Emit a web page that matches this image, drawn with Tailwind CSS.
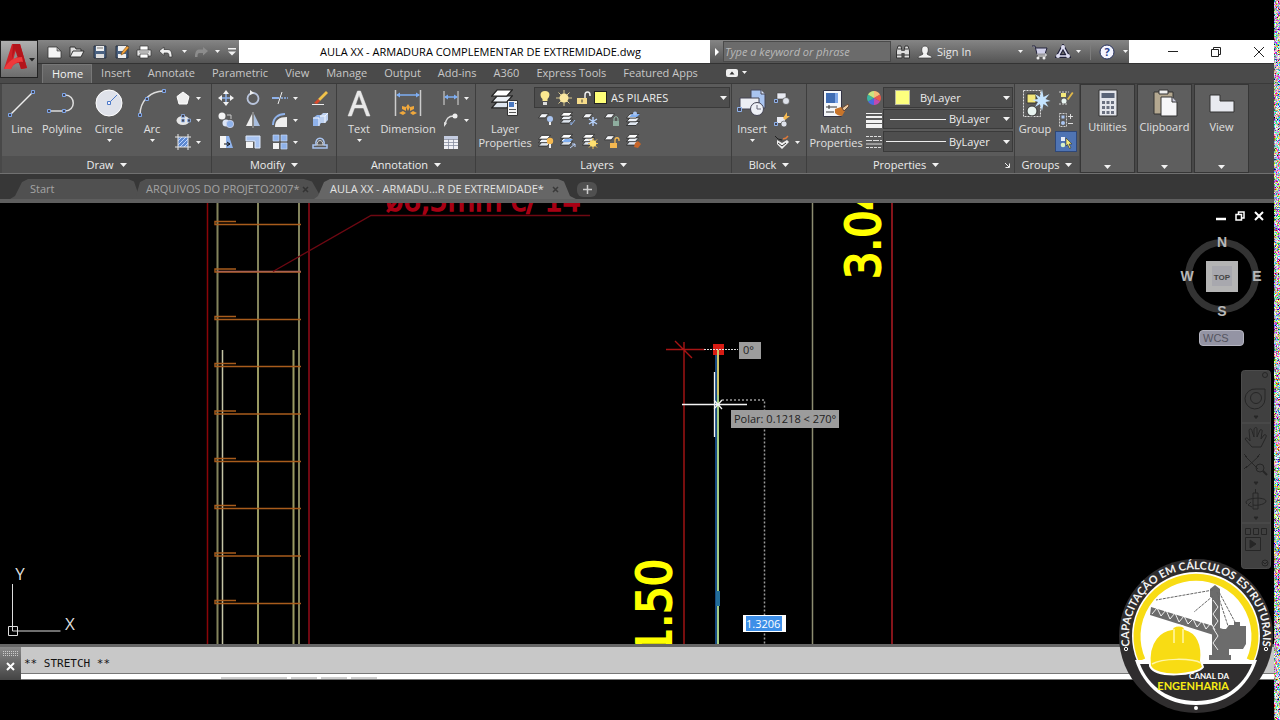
<!DOCTYPE html>
<html lang="pt-BR">
<head>
  <meta charset="UTF-8" />
  <meta name="viewport" content="width=device-width, initial-scale=1.0" />
  <title>AULA XX - ARMADURA COMPLEMENTAR DE EXTREMIDADE.dwg</title>
  <script src="https://cdn.jsdelivr.net/npm/@tailwindcss/browser@4"></script>
</head>
<body class="bg-black flex min-h-screen overflow-hidden font-['Open_Sans',sans-serif] text-[11px] leading-[14px] text-[#e0e0e0]">

  <!-- shared icon shapes -->
  <svg class="hidden">
    <symbol id="caret" viewBox="0 0 7 4"><path d="M0 0h7L3.500 4z" fill="#f2f2f2"/></symbol>
    <symbol id="sheets" viewBox="0 0 14 13">
      <path d="M4 8.500h9.500l-3.500 4H.5z" fill="#dfe6ef" stroke="#222" stroke-width=".8"/>
      <path d="M4 4.800h9.500l-3.500 4H.5z" fill="#eef2f7" stroke="#222" stroke-width=".8"/>
      <path d="M4 1h9.500L10 5H.5z" fill="#fff" stroke="#222" stroke-width=".8"/>
    </symbol>
    <symbol id="sheet" viewBox="0 0 12 6"><path d="M4 .5h7.500L8 5H.5z" fill="#f4f6fa" stroke="#222" stroke-width=".8"/></symbol>
  </svg>

  <div class="flex-1 min-w-0 flex flex-col pt-10 pb-10">

    <header class="flex bg-[#4a4a4a]">
      <button aria-label="Application menu" class="w-[38px] h-[38px] shrink-0 border border-[#222] bg-gradient-to-b from-[#b0b0b0] to-[#6c6c6c] flex items-center">
        <svg class="w-9 h-9" viewBox="0 0 36 36">
          <path d="M3 28 11 3h8l7 24-6 1-2-6c-3 0-6 1-8 6z" fill="#d02128"/>
          <path d="M12 3h7l7 24-6 1-6-20-3 10z" fill="#b3141b"/>
          <path d="M3 28c4-8 10-12 18-12l1 5c-6-1-10 2-12 7z" fill="#ee3a3c"/>
          <path d="m14.500 10 2 6-4 2z" fill="#8d8d8d"/>
          <path d="M28 17h6l-3 3.500z" fill="#222"/>
        </svg>
      </button>

      <div class="flex-1 min-w-0">
        <!-- title bar -->
        <div class="h-[23px] flex items-stretch bg-gradient-to-b from-[#858585] to-[#545454]">
          <div class="w-[201px] shrink-0 flex items-center pl-[6px]">
            <button aria-label="New" class="w-[22px] flex justify-center"><svg class="w-4 h-4" viewBox="0 0 16 16"><path d="M1 3h9l4 4v7H1z" fill="#f4f4f4" stroke="#333" stroke-width=".8"/><path d="M10 3v4h4z" fill="#aaa" stroke="#333" stroke-width=".6"/></svg></button>
            <button aria-label="Open" class="w-[23px] flex justify-center"><svg class="w-4 h-4" viewBox="0 0 16 16"><path d="M1 13V3h5l1 2h5v3" fill="#ddd" stroke="#333"/><path d="m1 13 3-6h11l-3 6z" fill="#eee" stroke="#333"/></svg></button>
            <button aria-label="Save" class="w-[23px] flex justify-center"><svg class="w-4 h-4" viewBox="0 0 16 16"><path d="M2 2h12v12H2z" fill="#4a6282" stroke="#2a3340"/><path d="M4 2h8v5H4z" fill="#eee"/><path d="M4 10h8v4H4z" fill="#ddd"/><path d="M5 4h6" stroke="#777"/></svg></button>
            <button aria-label="Save as" class="w-[23px] flex justify-center"><svg class="w-4 h-4" viewBox="0 0 16 16"><path d="M2 2h12v12H2z" fill="#4a6282" stroke="#2a3340"/><path d="M4 2h8v5H4zM4 10h8v4H4z" fill="#eee"/><path d="m7 11 1-3 5-6 2 1.500-5 6z" fill="#f2a33c" stroke="#7a4a10" stroke-width=".6"/></svg></button>
            <button aria-label="Plot" class="w-[22px] flex justify-center"><svg class="w-4 h-4" viewBox="0 0 16 16"><path d="M4 2h8v5H4z" fill="#fff" stroke="#333" stroke-width=".7"/><path d="M1 6h14v6H1z" fill="#e6e6e6" stroke="#333" stroke-width=".7"/><path d="M4 10h8v4H4z" fill="#fff" stroke="#333" stroke-width=".7"/><path d="M3 8h10" stroke="#888"/></svg></button>
            <button aria-label="Undo" class="w-[22px] flex justify-center"><svg class="w-4 h-4" viewBox="0 0 16 16"><path d="m1 7 5-4v2.500h4c4 0 4 6 4 7.500h-3c0-2 0-4-2-4H6v2.500z" fill="#eee" stroke="#333" stroke-width=".7"/></svg></button>
            <button aria-label="Undo list" class="w-[15px] flex justify-center"><svg class="w-[5px] h-[3px]"><use href="#caret"/></svg></button>
            <button aria-label="Redo" class="w-[18px] flex justify-center"><svg class="w-4 h-4" viewBox="0 0 16 16"><path d="m15 7-5-4v2.500H6c-4 0-4 6-4 7.500h2.500c0-2 0-4 2-4H10v2.500z" fill="#8c8c8c"/></svg></button>
            <button aria-label="Redo list" class="w-4 flex justify-center"><svg class="w-[5px] h-[3px]"><use href="#caret"/></svg></button>
            <button aria-label="Customize" class="w-[14px] flex justify-center"><svg class="w-2 h-2" viewBox="0 0 8 8"><path d="M0 0h8v1.500H0zM0 3.500h8l-4 4z" fill="#f2f2f2"/></svg></button>
          </div>
          <h1 class="flex-1 min-w-0 bg-white text-black text-[11px] flex items-center justify-center pl-3 whitespace-nowrap">AULA XX - ARMADURA COMPLEMENTAR DE EXTREMIDADE.dwg</h1>
          <button aria-label="Toggle search" class="w-[13px] shrink-0 flex items-center justify-center"><svg class="w-1 h-2" viewBox="0 0 4 8"><path d="m0 0 4 4-4 4z" fill="#fff"/></svg></button>
          <input type="text" aria-label="Search" placeholder="Type a keyword or phrase" class="w-[168px] shrink-0 my-px px-px border border-[#4a4a4a] bg-[#6b6b6b] text-[11px] italic placeholder:text-[#b9b9b9]">
          <div class="w-[238px] shrink-0 flex items-center">
            <button aria-label="Find" class="w-6 flex justify-center"><svg class="w-4 h-4" viewBox="0 0 16 16"><path d="M1.500 14V7l1.500-5h3l1 5v7zM9 14V7l1-5h3l1.500 5v7z" fill="#ddd" stroke="#333"/><path d="M6 7h4v2H6z" fill="#ddd"/><path d="M3 5h3M10 5h3M2 11h5M9 11h5" stroke="#333"/></svg></button>
            <button class="flex items-center gap-1 w-[81px] pl-[2px] text-[#e8e8e8]"><svg class="w-4 h-4" viewBox="0 0 16 16"><path d="M1 14c0-3 4-2.500 5-4-2-3-2-8 2-8s4 5 2 8c1 1.500 5 1 5 4z" fill="#f2f2f2" stroke="#333" stroke-width=".7"/></svg>Sign In</button>
            <button aria-label="Account menu" class="w-12 flex justify-center"><svg class="w-[5px] h-[3px]"><use href="#caret"/></svg></button>
            <button aria-label="App store" class="-ml-4 w-6 flex justify-center"><svg class="w-4 h-4" viewBox="0 0 16 16"><path d="M0 2h3l2 8h8l2-6H4" fill="#cfcfe8" stroke="#22223a" stroke-width="1"/><path d="M5 10h9v2H6" stroke="#eee" fill="none"/><circle cx="6" cy="14" r="1.500" fill="#eee"/><circle cx="12" cy="14" r="1.500" fill="#eee"/></svg></button>
            <button aria-label="Connect" class="w-[22px] flex justify-center"><svg class="w-4 h-4" viewBox="0 0 16 16"><path d="M8 3 3 12h10z" fill="none" stroke="#22223a" stroke-width="4"/><path d="M8 3 3 12h10z" fill="none" stroke="#dcdcf0" stroke-width="1.600"/><circle cx="8" cy="3" r="2" fill="#dcdcf0"/><circle cx="3" cy="12" r="2" fill="#dcdcf0"/><circle cx="13" cy="12" r="2" fill="#dcdcf0"/></svg></button>
            <button aria-label="Connect menu" class="w-2 flex justify-center"><svg class="w-[5px] h-[3px]"><use href="#caret"/></svg></button>
            <span class="ml-2 w-px h-4 bg-[#7c7c7c]"></span>
            <button aria-label="Help" class="w-8 flex justify-center"><svg class="w-4 h-4" viewBox="0 0 16 16"><circle cx="8" cy="8" r="7" fill="#f4f4ff" stroke="#26305c"/><text x="8" y="12" text-anchor="middle" font-size="11" font-weight="700" fill="#26408c">?</text></svg></button>
            <button aria-label="Help menu" class="w-[5px]"><svg class="w-[5px] h-[3px]"><use href="#caret"/></svg></button>
          </div>
          <div class="w-[145px] shrink-0 bg-white text-[#222] flex items-center pl-[23px]">
            <button aria-label="Minimize" class="w-[42px] flex justify-center"><svg class="w-3 h-3" viewBox="0 0 12 12"><path d="M1 5.500h10" stroke="#222"/></svg></button>
            <button aria-label="Restore" class="w-[43px] flex justify-center"><svg class="w-3 h-3" viewBox="0 0 12 12"><path d="M1.500 3.500h7v7h-7zM3.500 3V1.500h7v7H9" stroke="#222" fill="none"/></svg></button>
            <button aria-label="Close" class="flex-1 flex justify-center pl-[6px]"><svg class="w-3 h-3" viewBox="0 0 12 12"><path d="m1 1 10 10M11 1 1 11" stroke="#222"/></svg></button>
          </div>
        </div>

        <!-- ribbon tabs -->
        <nav class="h-5 flex items-stretch pl-1 pb-[2px] border-t border-[#333] text-[#c8c8c8] whitespace-nowrap">
          <a href="#" class="-mb-[2px] pl-[9px] pr-2 pt-[2px] bg-gradient-to-b from-[#6a6a6a] to-[#5c5c5c] border border-b-0 border-[#777] text-[#f4f4f4] flex items-start leading-[13px]">Home</a>
          <a href="#" class="pl-[9px] pr-2 flex items-center">Insert</a>
          <a href="#" class="pl-[9px] pr-2 flex items-center">Annotate</a>
          <a href="#" class="pl-[9px] pr-2 flex items-center">Parametric</a>
          <a href="#" class="pl-[9px] pr-2 flex items-center">View</a>
          <a href="#" class="pl-[9px] pr-2 flex items-center">Manage</a>
          <a href="#" class="pl-[9px] pr-2 flex items-center">Output</a>
          <a href="#" class="pl-[9px] pr-2 flex items-center">Add-ins</a>
          <a href="#" class="pl-[9px] pr-2 flex items-center">A360</a>
          <a href="#" class="pl-[9px] pr-2 flex items-center">Express Tools</a>
          <a href="#" class="pl-[9px] pr-2 flex items-center">Featured Apps</a>
          <button aria-label="Minimize ribbon" class="ml-5 flex items-center gap-1"><svg class="w-3 h-2" viewBox="0 0 12 8"><rect width="12" height="8" rx="2" fill="#eee"/><path d="M3.500 5.500h5L6 2.500z" fill="#333"/></svg><svg class="w-[5px] h-[3px]"><use href="#caret"/></svg></button>
        </nav>
      </div>
    </header>

    <!-- ribbon panels -->
    <section class="h-[91px] shrink-0 flex bg-[#484848] border-t border-b border-t-[#3a3a3a] border-b-[#707070] pl-[2px]">

      <div class="w-[210px] shrink-0 flex flex-col border-r border-[#3e3e3e] bg-[#5b5b5b]">
        <div class="flex-1 flex pt-[3px] items-start">
          <button class="w-10 flex flex-col items-center gap-[3px]">
            <svg class="w-8 h-8" viewBox="0 0 32 32"><path d="M4 28 27 5" stroke="#eee" stroke-width="1.500"/><path d="M2.500 26.500h3v3h-3zM25.500 3.500h3v3h-3z" fill="#445" stroke="#7ea6e8"/></svg>
            Line
          </button>
          <button class="w-10 flex flex-col items-center gap-[3px]">
            <svg class="w-8 h-8" viewBox="0 0 32 32"><path d="M4 24h15c11 0 11-16 0-16" stroke="#ddd" stroke-width="1.500" fill="none"/><path d="M1.500 22.500h3v3h-3zM16.500 22.500h3v3h-3zM16.500 6.500h3v3h-3z" fill="#445" stroke="#7ea6e8"/></svg>
            Polyline
          </button>
          <button class="w-[54px] flex flex-col items-center gap-[3px]">
            <svg class="w-8 h-8" viewBox="0 0 32 32"><circle cx="16" cy="16" r="13" fill="#dfe2ea" stroke="#fff"/><path d="m16 16 8-8" stroke="#4d7bc9"/><path d="M14.500 14.500h3v3h-3z" fill="#eef" stroke="#4d7bc9"/></svg>
            Circle
            <svg class="w-[5px] h-[3px]"><use href="#caret"/></svg>
          </button>
          <button class="w-8 flex flex-col items-center gap-[3px]">
            <svg class="w-8 h-8" viewBox="0 0 32 32"><path d="M4 28C4 14 14 4 28 4" stroke="#ddd" stroke-width="1.500" fill="none"/><path d="M2.500 26.500h3v3h-3zM9.500 10.500h3v3h-3zM26.500 2.500h3v3h-3z" fill="#445" stroke="#7ea6e8"/></svg>
            Arc
            <svg class="w-[5px] h-[3px]"><use href="#caret"/></svg>
          </button>
          <div class="pl-[7px]">
            <button aria-label="Polygon" class="h-[22px] flex items-center gap-[5px]"><svg class="w-4 h-4" viewBox="0 0 16 16"><path d="m8 2 6 4.500L12 14H4L2 6.500z" fill="#eee" stroke="#fff"/></svg><svg class="w-[5px] h-[3px]"><use href="#caret"/></svg></button>
            <button aria-label="Ellipse" class="h-[22px] flex items-center gap-[5px]"><svg class="w-4 h-4" viewBox="0 0 16 16"><ellipse cx="8" cy="8.500" rx="6.500" ry="4.500" fill="#e6e6e6"/><path d="M6.500 7h3v3h-3zM12.500 7h3v3h-3zM6.500 2.500h3v3h-3z" fill="#445" stroke="#8fb2ea" stroke-width=".8"/></svg><svg class="w-[5px] h-[3px]"><use href="#caret"/></svg></button>
            <button aria-label="Hatch" class="h-[22px] flex items-center gap-[5px]"><svg class="w-4 h-4" viewBox="0 0 16 16"><path d="M3 3h10v10H3z" fill="#5c88d0"/><path d="m3 7 4-4M3 11l8-8M5 13l8-8M9 13l4-4" stroke="#bcd4ff"/><path d="M3 0v16M13 0v16M0 3h16M0 13h16" stroke="#e8e8e8"/></svg><svg class="w-[5px] h-[3px]"><use href="#caret"/></svg></button>
          </div>
        </div>
        <button class="h-[17px] flex items-center justify-center gap-[6px] bg-[#505050] text-[#ececec]">Draw <svg class="w-[7px] h-1"><use href="#caret"/></svg></button>
      </div>

      <div class="w-[125px] shrink-0 flex flex-col border-r border-[#3e3e3e] bg-[#5b5b5b]">
        <div class="flex-1 grid grid-cols-[28px_26px_38px_32px] auto-rows-[22px] pt-[3px] justify-items-center items-center">
          <button aria-label="Move"><svg class="w-4 h-4" viewBox="0 0 16 16"><path d="m8 0 3 4H5zM8 16l3-4H5zM0 8l4-3v6zM16 8l-4-3v6z" fill="#f2f2f2"/><path d="M8 4v8M4 8h8" stroke="#8fb2ea" stroke-width="1.500"/></svg></button>
          <button aria-label="Rotate"><svg class="w-4 h-4" viewBox="0 0 16 16"><circle cx="8" cy="8.500" r="5.500" fill="none" stroke="#b8c4dc" stroke-width="1.800"/><path d="M5 0v5l4-2z" fill="#eee"/></svg></button>
          <button aria-label="Trim" class="flex items-center gap-[5px]"><svg class="w-4 h-4" viewBox="0 0 16 16"><path d="M0 8h7" stroke="#8fb2ea" stroke-width="2"/><path d="M9 8h7" stroke="#8fb2ea" stroke-width="1.500" stroke-dasharray="2 1"/><path d="M10 2 6 14" stroke="#eee"/></svg><svg class="w-[5px] h-[3px]"><use href="#caret"/></svg></button>
          <button aria-label="Erase"><svg class="w-4 h-4" viewBox="0 0 16 16"><path d="m6 9 8-8 2 2-8 8z" fill="#f0c24a"/><path d="m2 13 4-4 2 2-3 3z" fill="#d9482a"/><path d="M0 14.500h12" stroke="#eee"/></svg></button>
          <button aria-label="Copy"><svg class="w-4 h-4" viewBox="0 0 16 16"><circle cx="4" cy="4" r="3.500" fill="#f4f4f4"/><circle cx="8" cy="11" r="3.500" fill="#dde6f6"/><circle cx="12" cy="12" r="3.700" fill="#8fb2ea" stroke="#dde" stroke-width=".7"/><path d="M9 3h4v4" fill="none" stroke="#ccc"/></svg></button>
          <button aria-label="Mirror"><svg class="w-4 h-4" viewBox="0 0 16 16"><path d="M7 2v12H1z" fill="#eee"/><path d="M9 2v12h6z" fill="#a9bede"/><path d="M8 0v16" stroke="#ddd" stroke-width=".7"/></svg></button>
          <button aria-label="Fillet" class="flex items-center gap-[5px]"><svg class="w-4 h-4" viewBox="0 0 16 16"><path d="M3 15c0-7 4-10 12-10v10z" fill="#eee"/><path d="M1 13C1 6 6 2 13 2" fill="none" stroke="#8fb2ea" stroke-width="2"/></svg><svg class="w-[5px] h-[3px]"><use href="#caret"/></svg></button>
          <button aria-label="Explode"><svg class="w-4 h-4" viewBox="0 0 16 16"><path d="m1 6 4-3h4v8l-2 3H1z" fill="#8fb2ea"/><path d="m8 4 3-3h5v7l-3 3H8z" fill="#bcd0f0"/><path d="M8 4h5v7M13 4l3-3M1 6h6v8" fill="none" stroke="#f4f8ff"/></svg></button>
          <button aria-label="Stretch"><svg class="w-4 h-4" viewBox="0 0 16 16"><path d="M2 2h6v12H2z" fill="#f4f4f4"/><path d="m8 2 3 0 4 12H8z" fill="#8fb2ea"/><path d="M6 10h5M9 8l3 2-3 2" fill="none" stroke="#111"/></svg></button>
          <button aria-label="Scale"><svg class="w-4 h-4" viewBox="0 0 16 16"><path d="M1 2h14v12h-5V7H1z" fill="#a9c4f0" stroke="#dde8fa"/><path d="M1 8h7v6H1z" fill="#f4f4f4"/></svg></button>
          <button aria-label="Array" class="flex items-center gap-[5px]"><svg class="w-4 h-4" viewBox="0 0 16 16"><path d="M1 9h6v6H1z" fill="#f4f4f4"/><path d="M1 1h6v6H1zM9 1h6v6H9zM9 9h6v6H9z" fill="#8fb2ea" stroke="#c6d8f6" stroke-width=".7"/></svg><svg class="w-[5px] h-[3px]"><use href="#caret"/></svg></button>
          <button aria-label="Offset"><svg class="w-4 h-4" viewBox="0 0 16 16"><path d="M1 14h14v-3h-3c2-9-10-9-8 0H1z" fill="none" stroke="#a9c4f0" stroke-width="1.500"/><path d="M5 11h6c0-6-6-6-6 0" fill="none" stroke="#eee" stroke-width=".8"/></svg></button>
        </div>
        <button class="h-[17px] flex items-center justify-center gap-[6px] bg-[#505050] text-[#ececec]">Modify <svg class="w-[7px] h-1"><use href="#caret"/></svg></button>
      </div>

      <div class="w-[139px] shrink-0 flex flex-col border-r border-[#3e3e3e] bg-[#5b5b5b]">
        <div class="flex-1 flex pt-[3px] items-start">
          <button class="w-11 flex flex-col items-center gap-[3px]">
            <svg class="w-8 h-8" viewBox="0 0 32 32"><path d="M5 29 14.500 4h3L27 29h-3.500l-3-8h-9l-3 8zM12.500 18h7L16 8z" fill="#e8e8e8" stroke="#e8e8e8" stroke-width=".5" fill-rule="evenodd"/></svg>
            Text
            <svg class="w-[5px] h-[3px]"><use href="#caret"/></svg>
          </button>
          <button class="w-[54px] flex flex-col items-center gap-[3px]">
            <svg class="w-8 h-8" viewBox="0 0 32 32"><path d="M3.500 3v26M28.500 3v26" stroke="#ccc" stroke-width="1.500"/><path d="M5 8h22" stroke="#7eaef2" stroke-width="1.500"/><path d="m4 8 4-2.500v5zM28 8l-4-2.500v5z" fill="#7eaef2"/><g fill="#f0a83c"><path d="m16 17 2 3-2 4-2-4zM10 19l4 1 0 4-4-2zM22 19l-4 1 0 4 4-2zM7 26l4-2 3 2-3 2zM25 26l-4-2-3 2 3 2z"/></g></svg>
            Dimension
          </button>
          <div class="pl-2">
            <button aria-label="Linear" class="h-[22px] flex items-center gap-[5px]"><svg class="w-4 h-4" viewBox="0 0 16 16"><path d="M1 1v14M15 1v14" stroke="#ddd"/><path d="M2 7h12" stroke="#7eaef2" stroke-width="1.500"/><path d="m1 7 4-2.500v5zM15 7l-4-2.500v5z" fill="#7eaef2"/></svg><svg class="w-[5px] h-[3px]"><use href="#caret"/></svg></button>
            <button aria-label="Leader" class="h-[22px] flex items-center gap-[5px]"><svg class="w-4 h-4" viewBox="0 0 16 16"><path d="M2 13C3 7 5 4 11 4" fill="none" stroke="#ddd" stroke-width="1.300"/><circle cx="12" cy="4" r="2.500" fill="#eee"/><path d="m1 15 0-5 3 1z" fill="#ddd"/></svg><svg class="w-[5px] h-[3px]"><use href="#caret"/></svg></button>
            <button aria-label="Table" class="h-[22px] flex items-center"><svg class="w-4 h-4" viewBox="0 0 16 16"><path d="M1 2h14v13H1z" fill="#f0f0f4"/><path d="M1 2h14v3H1z" fill="#c4cce0"/><path d="M1 5.500h14M1 8.500h14M1 11.500h14M5.500 5v10M10.500 5v10" stroke="#888ea0" stroke-width=".8"/></svg></button>
          </div>
        </div>
        <button class="h-[17px] flex items-center justify-center gap-[6px] bg-[#505050] text-[#ececec]">Annotation <svg class="w-[7px] h-1"><use href="#caret"/></svg></button>
      </div>

      <div class="w-64 shrink-0 flex flex-col border-r border-[#3e3e3e] bg-[#5b5b5b]">
        <div class="flex-1 flex pt-[3px] items-start">
          <button class="w-[58px] flex flex-col items-center gap-[3px]">
            <svg class="w-8 h-8" viewBox="0 0 32 32"><use href="#sheets" x="2" y="1" width="22" height="21"/><path d="M18.500 13.500h10v15h-10z" fill="#f4f4f4" stroke="#333"/><path d="M20 15h5v5h-5z" fill="#4a78c0"/><path d="M20 22.500h7M20 25.500h7M26 16.500h1.500" stroke="#555"/></svg>
            Layer Properties
          </button>
          <div class="flex-1 pr-px">
            <div class="relative h-[21px]">
              <select aria-label="Layer" class="appearance-none w-full h-[21px] pl-[76px] border border-[#3a3a3a] bg-[#4e4e4e] text-[11px] text-[#ececec]">
                <option>AS PILARES</option>
              </select>
              <span class="absolute inset-y-0 left-[3px] right-[3px] flex items-center gap-[3px] pointer-events-none">
                <svg class="w-4 h-4" viewBox="0 0 16 16"><path d="M8 1c6 0 5 6 2.500 8v2h-5V9C3 7 2 1 8 1" fill="#fbe890"/><path d="M6 12h4v3H6z" fill="#ddd"/></svg>
                <svg class="w-4 h-4" viewBox="0 0 16 16"><path d="M8 0v16M0 8h16M2.500 2.500l11 11M13.500 2.500l-11 11" stroke="#d8c890"/><circle cx="8" cy="8" r="4.500" fill="#fbe8a0"/></svg>
                <svg class="w-4 h-4" viewBox="0 0 16 16"><path d="M10 8V5c0-4 5-4 5 0v1" fill="none" stroke="#eee" stroke-width="1.500"/><path d="M2 8h10v6H2z" fill="#f6dc8a"/><path d="M7 9.500v3" stroke="#333"/></svg>
                <i class="w-[13px] h-[13px] bg-[#ffff78] border border-[#222]"></i>
                <svg class="w-[7px] h-1 ml-auto"><use href="#caret"/></svg>
              </span>
            </div>
            <div class="grid grid-cols-[repeat(5,22px)] auto-rows-[22px] pl-px items-center justify-items-center">
              <button aria-label="Off"><svg class="w-4 h-4" viewBox="0 0 16 16"><use href="#sheet" x="0" y="2" width="11" height="6"/><circle cx="12" cy="8" r="3" fill="#a9c4f0"/><path d="M11 11h2v3h-2z" fill="#eee"/></svg></button>
              <button aria-label="Isolate"><svg class="w-4 h-4" viewBox="0 0 16 16"><use href="#sheets" x="0" y="0" width="13" height="13"/><path d="m15 9-4 5v-3" stroke="#8fb2ea" fill="none"/></svg></button>
              <button aria-label="Freeze"><svg class="w-4 h-4" viewBox="0 0 16 16"><use href="#sheet" x="0" y="2" width="11" height="6"/><path d="M11 6v9M7 8l8 5M15 8l-8 5" stroke="#b8d4ff" stroke-width="1.400"/></svg></button>
              <button aria-label="Lock"><svg class="w-4 h-4" viewBox="0 0 16 16"><use href="#sheet" x="0" y="2" width="11" height="6"/><path d="M10 10V8c0-3 4-3 4 0v2" fill="none" stroke="#9bc4b0"/><path d="M9 10h6v5H9z" fill="#8fae9f"/></svg></button>
              <button aria-label="Make current"><svg class="w-4 h-4" viewBox="0 0 16 16"><use href="#sheets" x="0" y="2" width="14" height="13"/><path d="m3 6 3-3h8l-3 3z" fill="#7eaef2"/><circle cx="9" cy="2.500" r="2" fill="#a9c4f0"/></svg></button>
              <button aria-label="Turn all on"><svg class="w-4 h-4" viewBox="0 0 16 16"><use href="#sheets" x="0" y="1" width="13" height="13"/><circle cx="12" cy="8" r="3.200" fill="#f4b850"/><path d="M11 11h2v4h-2z" fill="#eee"/></svg></button>
              <button aria-label="Unisolate"><svg class="w-4 h-4" viewBox="0 0 16 16"><use href="#sheets" x="0" y="0" width="13" height="13"/><path d="m2 9 3-3h8l-3 3z" fill="#7eaef2"/><path d="m10 15 5-4M12 11h3v3" stroke="#bcd4ff" fill="none"/></svg></button>
              <button aria-label="Thaw all"><svg class="w-4 h-4" viewBox="0 0 16 16"><use href="#sheets" x="0" y="0" width="13" height="13"/><path d="M11 5v11M6 10.500h10M7 6.500l8 8M15 6.500l-8 8" stroke="#f4c050"/><circle cx="11" cy="10.500" r="3.300" fill="#ffe070"/></svg></button>
              <button aria-label="Unlock"><svg class="w-4 h-4" viewBox="0 0 16 16"><use href="#sheet" x="0" y="2" width="11" height="6"/><path d="M11 10V7c0-3 4-3 4 0v1" fill="none" stroke="#f4b850" stroke-width="1.300"/><path d="M6 10h7v5H6z" fill="#f4b850"/></svg></button>
              <button aria-label="Match layer"><svg class="w-4 h-4" viewBox="0 0 16 16"><use href="#sheets" x="0" y="0" width="13" height="13"/><path d="m9 10 3-2 3 3-3 4-4-1z" fill="#c8662a"/></svg></button>
            </div>
          </div>
        </div>
        <button class="h-[17px] flex items-center justify-center gap-[6px] bg-[#505050] text-[#ececec]">Layers <svg class="w-[7px] h-1"><use href="#caret"/></svg></button>
      </div>

      <div class="w-[75px] shrink-0 flex flex-col border-r border-[#3e3e3e] bg-[#5b5b5b]">
        <div class="flex-1 flex pt-[3px] items-start">
          <button class="w-10 flex flex-col items-center gap-[3px]">
            <svg class="w-8 h-8" viewBox="0 0 32 32"><path d="M15 3h10l4 4v14H15z" fill="#a9c4f0" stroke="#445"/><path d="M25 3v4h4" fill="#dde8fa" stroke="#445"/><path d="M4 11h19v11H4z" fill="#eceef4" stroke="#445"/><circle cx="21" cy="22" r="6.500" fill="#eef0f6" stroke="#445"/><path d="M21 18v4h4" fill="none" stroke="#667"/><path d="M1.500 20.500h4v4h-4z" fill="#445" stroke="#8fb2ea"/></svg>
            Insert
            <svg class="w-[5px] h-[3px]"><use href="#caret"/></svg>
          </button>
          <div>
            <button aria-label="Create block" class="h-[22px] flex items-center pl-[2px]"><svg class="w-4 h-4" viewBox="0 0 16 16"><path d="M3 3h9v6H3z" fill="#e8eaf2" stroke="#444" stroke-width=".6"/><circle cx="12" cy="11" r="3.500" fill="#dfe3ec" stroke="#444" stroke-width=".6"/><path d="M.5 9.500h3v3h-3z" fill="#445" stroke="#8fb2ea"/></svg></button>
            <button aria-label="Edit block" class="h-[22px] flex items-center pl-[2px]"><svg class="w-4 h-4" viewBox="0 0 16 16"><path d="M3 5h8v6H3z" fill="#e8eaf2"/><circle cx="10" cy="12" r="3" fill="#dfe3ec" stroke="#444" stroke-width=".6"/><path d="m9 6 4-6v4h3l-5 4z" fill="#f4b850"/><path d="M.5 10.500h3v3h-3z" fill="#445" stroke="#8fb2ea"/></svg></button>
            <button aria-label="Edit attributes" class="h-[22px] flex items-center gap-[5px] pl-[2px]"><svg class="w-4 h-4" viewBox="0 0 16 16"><path d="m3 6 5 3 5-3 2 2-7 7-5-5z" fill="#f0f0f0"/><path d="m1 2 3 3 4 1" fill="none" stroke="#222"/><path d="m9 5 3-1 2-2" fill="none" stroke="#e07a3a" stroke-width="1.500"/><path d="m4 9 4 3 4-3" fill="none" stroke="#333"/></svg><svg class="w-[5px] h-[3px]"><use href="#caret"/></svg></button>
          </div>
        </div>
        <button class="h-[17px] flex items-center justify-center gap-[6px] bg-[#505050] text-[#ececec]">Block <svg class="w-[7px] h-1"><use href="#caret"/></svg></button>
      </div>

      <div class="w-[208px] shrink-0 flex flex-col border-r border-[#3e3e3e] bg-[#5b5b5b]">
        <div class="flex-1 flex pt-[3px] items-start">
          <button class="w-[58px] flex flex-col items-center gap-[3px]">
            <svg class="w-8 h-8" viewBox="0 0 32 32"><path d="M3.500 3.500h18v26h-18z" fill="#f4f6fa" stroke="#334"/><path d="M6 6h12v10H6z" fill="#3f6cb4"/><path d="M15 6h3v10h-3z" fill="#7ea6e8"/><path d="M6 20h11M6 25h8M9 18v4" stroke="#333"/><path d="m15 22 6-2 4 4-3 5c-3 0-5-1-7-3z" fill="#c8742a"/><path d="m22 21 6-4 1 2-5 5z" fill="#e8c8a0" stroke="#643"/></svg>
            Match Properties
          </button>
          <div class="w-[18px]">
            <div class="h-[22px] flex items-center pl-px"><svg class="w-4 h-4" viewBox="0 0 16 16"><path d="M8 8V1a7 7 0 0 1 6 3.500z" fill="#f4a03c"/><path d="m8 8 6-3.500a7 7 0 0 1 0 7z" fill="#e85a4a"/><path d="m8 8 6 3.500A7 7 0 0 1 8 15z" fill="#c04ab0"/><path d="M8 8v7a7 7 0 0 1-6-3.500z" fill="#4a6ae0"/><path d="m8 8-6 3.500a7 7 0 0 1 0-7z" fill="#3cb4a0"/><path d="M8 8 2 4.500A7 7 0 0 1 8 1z" fill="#b4d84a"/><path d="M8 8 2 4.500A7 7 0 0 1 14 4.500z" fill="#fff" opacity=".3"/></svg></div>
            <div class="h-[22px] flex items-center pl-px"><svg class="w-4 h-4" viewBox="0 0 16 16"><path d="M0 1h16v1H0zM0 4h16v2H0zM0 8h16v3H0zM0 12h16v4H0z" fill="#f2f2f2"/></svg></div>
            <div class="h-[22px] flex items-center pl-px"><svg class="w-4 h-4" viewBox="0 0 16 16"><path d="M0 2.500h16M0 13.500h16" stroke="#ddd" stroke-dasharray="3 1"/><path d="M0 6.500h16" stroke="#ddd" stroke-dasharray="6 1"/><path d="M0 10h16" stroke="#ddd"/></svg></div>
          </div>
          <div class="flex-1 pr-px">
            <div class="relative h-[22px]">
              <select aria-label="Object color" class="appearance-none w-full h-[21px] pl-9 border border-[#3a3a3a] bg-[#4e4e4e] text-[11px] text-[#ececec]"><option>ByLayer</option></select>
              <span class="absolute top-0 h-[21px] left-3 right-[3px] flex items-center pointer-events-none"><i class="w-[15px] h-[15px] bg-[#fdff7e] border border-[#b8b8a0]"></i><svg class="w-[7px] h-1 ml-auto"><use href="#caret"/></svg></span>
            </div>
            <div class="relative h-[22px]">
              <select aria-label="Lineweight" class="appearance-none w-full h-[20px] pl-[65px] border border-[#3a3a3a] bg-[#4e4e4e] text-[11px] text-[#ececec]"><option>ByLayer</option></select>
              <span class="absolute top-0 h-[20px] left-[7px] right-[3px] flex items-center pointer-events-none"><i class="w-[56px] h-px bg-[#eee]"></i><svg class="w-[7px] h-1 ml-auto"><use href="#caret"/></svg></span>
            </div>
            <div class="relative h-[22px]">
              <select aria-label="Linetype" class="appearance-none w-full h-[21px] pl-[65px] border border-[#3a3a3a] bg-[#4e4e4e] text-[11px] text-[#ececec]"><option>ByLayer</option></select>
              <span class="absolute top-0 h-[21px] left-[3px] right-[3px] flex items-center pointer-events-none"><i class="w-[60px] h-px bg-[#eee]"></i><svg class="w-[7px] h-1 ml-auto"><use href="#caret"/></svg></span>
            </div>
          </div>
        </div>
        <div class="h-[17px] flex items-center bg-[#505050] pl-[66px] pr-1">
          <button class="flex items-center gap-[6px] text-[#ececec]">Properties <svg class="w-[7px] h-1"><use href="#caret"/></svg></button>
          <button aria-label="Properties palette" class="ml-auto"><svg class="w-[6px] h-[6px]" viewBox="0 0 6 6"><path d="m1 1 4 4M5.500 1.500v4h-4" stroke="#eee" fill="none"/></svg></button>
        </div>
      </div>

      <div class="w-[64px] shrink-0 flex flex-col bg-[#5b5b5b]">
        <div class="flex-1 flex pt-[3px] items-start">
          <button class="w-10 flex flex-col items-center gap-[3px]">
            <svg class="w-8 h-8" viewBox="0 0 32 32"><path d="M4.500 3.500h17v26h-17z" fill="none" stroke="#ddd" stroke-dasharray="2 1"/><path d="M8 7h9v9H8z" fill="#f4e87a" stroke="#333"/><circle cx="13" cy="24" r="5" fill="#e8f4f0" stroke="#333"/><path d="m23 2 1.500 8 6-3-4 5 5 2-5 1 3 5-5-3-1.500 7-2-7-5 3 3-5-6-2 6-1-3-5 5 3z" fill="#c4e4ff"/></svg>
            Group
          </button>
          <div class="flex flex-col items-center">
            <button aria-label="Group edit" class="h-[22px] w-[22px] flex items-center justify-center"><svg class="w-4 h-4" viewBox="0 0 16 16"><path d="M1 2h10M1 14h8" stroke="#ccc" stroke-dasharray="2 1"/><path d="M3 3h5v4H3z" fill="#f4e87a"/><circle cx="6" cy="11" r="2.500" fill="#e8f4f0"/><path d="m9 9 5-7 1.500 1-5 7z" fill="#e0b84a"/></svg></button>
            <button aria-label="Ungroup" class="h-[22px] w-[22px] flex items-center justify-center"><svg class="w-4 h-4" viewBox="0 0 16 16"><path d="M1.500 1.500h7v13h-7z" fill="none" stroke="#ccc" stroke-dasharray="2 1"/><path d="M3.500 3.500h3v3h-3z" fill="#a9c4f0"/><circle cx="5" cy="11" r="2" fill="#a9c4f0"/><path d="M10 4.500h5M12.500 2v5M10 11.500h5" stroke="#ddd"/></svg></button>
            <button aria-label="Group selection" class="h-[21px] w-[22px] flex items-center justify-center bg-[#4f74b4] border border-[#2f4878]"><svg class="w-4 h-4" viewBox="0 0 16 16"><path d="M3 3h4v4H3z" fill="#e8eef8"/><circle cx="5" cy="11" r="2.300" fill="#d8f0c8"/><path d="m8 4 6 6H11l2 4-1.500.5-2-4L8 12z" fill="#f4e87a" stroke="#333" stroke-width=".6"/></svg></button>
          </div>
        </div>
        <button class="h-[17px] flex items-center justify-center gap-[6px] bg-[#505050] text-[#ececec]">Groups <svg class="w-[7px] h-1"><use href="#caret"/></svg></button>
      </div>

      <div class="flex-1 flex gap-[2px] pl-px">
        <button class="w-[55px] flex flex-col items-center pt-[2px] pb-[3px] gap-px border border-[#363636] bg-[#5e5e5e]">
          <svg class="w-8 h-8" viewBox="0 0 32 32"><path d="M7 3h18v26H7z" fill="#e4e6ec" stroke="#333"/><path d="M9.500 6h13v5h-13z" fill="#5a6478"/><path d="M10 14h3v3h-3zM14.500 14h3v3h-3zM19 14h3v3h-3zM10 19h3v3h-3zM14.500 19h3v3h-3zM19 19h3v3h-3zM10 24h3v3h-3zM14.500 24h3v3h-3zM19 24h3v3h-3z" fill="#6a7080"/></svg>
          Utilities
          <svg class="w-[7px] h-1 mt-auto"><use href="#caret"/></svg>
        </button>
        <button class="w-[55px] flex flex-col items-center pt-[2px] pb-[3px] gap-px border border-[#363636] bg-[#5e5e5e]">
          <svg class="w-8 h-8" viewBox="0 0 32 32"><path d="M5 5h19v22H5z" fill="#b4a890" stroke="#333"/><path d="M10 3h9v4h-9z" fill="#f0f0f0" stroke="#333"/><path d="M12 10h11l5 5v14H12z" fill="#f6f6f8" stroke="#333"/><path d="M23 10v5h5" fill="#ccd" stroke="#333"/></svg>
          Clipboard
          <svg class="w-[7px] h-1 mt-auto"><use href="#caret"/></svg>
        </button>
        <button class="w-[55px] flex flex-col items-center pt-[2px] pb-[3px] gap-px border border-[#363636] bg-[#5e5e5e]">
          <svg class="w-8 h-8" viewBox="0 0 32 32"><path d="M4 8h10v6h14v11H4z" fill="#e8eaf0" stroke="#333"/></svg>
          View
          <svg class="w-[7px] h-1 mt-auto"><use href="#caret"/></svg>
        </button>
      </div>
    </section>

    <!-- drawing tabs -->
    <nav class="h-[29px] shrink-0 flex items-end bg-[#373737] border-b-[4px] border-[#5e5e5e] pl-[10px] text-[#a4a4a4] whitespace-nowrap">
      <a href="#" class="w-[130px] h-5 pl-5 flex items-center bg-[#505050] [clip-path:polygon(0_100%,5px_85%,12px_15%,18px_0,118px_0,124px_12%,130px_100%)]">Start</a>
      <a href="#" class="-ml-2 w-[190px] h-5 pl-[14px] flex items-center justify-between pr-[13px] bg-[#505050] [clip-path:polygon(0_100%,4px_85%,8px_15%,14px_0,172px_0,180px_12%,190px_100%)]">ARQUIVOS DO PROJETO2007*
        <svg class="w-[7px] h-[7px]" viewBox="0 0 7 7"><path d="m1 1 5 5M6 1 1 6" stroke="#333" stroke-width="1.500"/></svg></a>
      <a href="#" class="-ml-2 w-[262px] h-5 pl-4 flex items-center justify-between pr-[17px] bg-[#666] text-[#e4e4e4] [clip-path:polygon(0_100%,4px_85%,10px_15%,16px_0,244px_0,250px_12%,256px_85%,262px_100%)]">AULA XX - ARMADU...R DE EXTREMIDADE*
        <svg class="w-[7px] h-[7px]" viewBox="0 0 7 7"><path d="m1 1 5 5M6 1 1 6" stroke="#3a3a3a" stroke-width="1.500"/></svg></a>
      <button aria-label="New tab" class="ml-px mb-[2px] w-5 h-[15px] rounded-[6px] bg-[#505050] flex items-center justify-center"><svg class="w-[9px] h-[9px]" viewBox="0 0 9 9"><path d="M4.500 0v9M0 4.500h9" stroke="#ccc" stroke-width="1.500"/></svg></button>
    </nav>

    <!-- model space -->
    <main class="relative flex-1 min-h-[441px] overflow-hidden bg-black">
      <svg class="absolute inset-0 w-full h-full">
        <g transform="translate(0 -203)" fill="none">
          <path d="M207.500 200v450" stroke="#8a0508" stroke-width="1.500"/>
          <path d="M309 200v450" stroke="#6e0812" stroke-width="2"/>
          <path d="M217.500 200v450M258 200v450M299 200v450" stroke="#83835c" stroke-width="2"/>
          <path d="M258 350v300M293.500 350v300" stroke="#999962" stroke-width="2"/>
          <path d="M222.500 350v300" stroke="#c4c4a4" stroke-width="1.500"/>
          <g stroke="#a85c1c" stroke-width="1.400">
            <path d="M236 221.500h-21v3h86M236 269h-21v3h86M236 316.500h-21v3h86M236 363.500h-21v3h86M236 411h-21v3h86M236 458.500h-21v3h86M236 505.500h-21v3h86M236 553h-21v3h86M236 600.500h-21v3h86"/>
          </g>
          <path d="M217 271.500h84" stroke="#a86050" stroke-width="1.500"/>
          <path d="M590 215.500H371L273 271.500" stroke="#6e0812" stroke-width="1.300"/>
          <text x="386" y="211" class="font-['DejaVu_Sans']" font-size="28" fill="#a80014" stroke="#a80014" stroke-width="1.500">ø6,5mm c/ 14</text>

          <path d="M812.500 200v450" stroke="#8c8c70" stroke-width="1.500"/>
          <path d="M892 200v450" stroke="#84141a" stroke-width="2"/>
          <text transform="translate(880 279) rotate(-90)" class="font-['DejaVu_Sans_Condensed','DejaVu_Sans']" font-size="48" fill="#ff0" stroke="#ff0" stroke-width="2">3.04</text>
          <text transform="translate(671 655) rotate(-90)" class="font-['DejaVu_Sans_Condensed','DejaVu_Sans']" font-size="48" fill="#ff0" stroke="#ff0" stroke-width="2">1.50</text>

          <path d="M684 342v308M666 349.500h39M675 341l17 17" stroke="#a81414" stroke-width="1.400"/>
          <path d="M713 344h11v11h-11z" fill="#d81c14"/>
          <path d="M704 349.500h34" stroke="#ddd" stroke-dasharray="2 1"/>
          <path d="M716 355v295" stroke="#174a80" stroke-width="2"/>
          <path d="M718 350v300" stroke="#a4cc84" stroke-width="2"/>
          <path d="M718 350v45" stroke="#d8c060" stroke-width="1.500"/>
          <path d="M716 591h4v15h-4z" fill="#226c98"/>
          <path d="M722 400h42.500v250" stroke="#999" stroke-width="1.500" stroke-dasharray="2 2"/>
          <path d="M682 404.500h65M714.500 372v65M714 400l8 9M722 400l-8 9" stroke="#f4f4f4" stroke-width="1.300"/>

          <path d="M12.500 584v47h48M8.500 626.500h9v9h-9z" stroke="#ddd"/>
          <text x="20" y="580" text-anchor="middle" class="font-['Open_Sans']" font-size="17" fill="#ddd">Y</text>
          <text x="70" y="630" text-anchor="middle" class="font-['Open_Sans']" font-size="17" fill="#ddd">X</text>
        </g>
      </svg>

      <output class="absolute left-[739px] top-[139px] w-[22px] h-[17px] bg-[#9c9c9c] text-[#222] text-[11px] leading-[16px] pl-1">0°</output>
      <output class="absolute left-[731px] top-[207px] w-[108px] h-[18px] bg-[#9c9c9c] text-[#222] text-[11px] leading-[17px] pl-[3px] whitespace-nowrap">Polar: 0.1218 &lt; 270°</output>
      <label class="absolute left-[743px] top-[412px] w-[43px] h-[17px] bg-white p-px pl-[3px]"><input aria-label="Length" type="text" value="1.3206" class="block w-9 h-[15px] bg-[#3d8fe8] text-white text-[11px]"></label>

      <div class="absolute right-[10px] top-[8px] flex gap-[9px]">
        <button aria-label="Minimize drawing"><svg class="w-[10px] h-[10px]" viewBox="0 0 10 10"><path d="M0 8h10" stroke="#fff" stroke-width="2.500"/></svg></button>
        <button aria-label="Restore drawing"><svg class="w-[10px] h-[10px]" viewBox="0 0 10 10"><path d="M1 3.500h5.500V9H1zM3.500 3V1H9v6H7" stroke="#fff" stroke-width="1.500" fill="none"/></svg></button>
        <button aria-label="Close drawing"><svg class="w-[10px] h-[10px]" viewBox="0 0 10 10"><path d="m1 1 8 8M9 1 1 9" stroke="#fff" stroke-width="2"/></svg></button>
      </div>

      <!-- view cube -->
      <svg class="absolute right-[8px] top-[29px] w-[88px] h-[90px] font-['Liberation_Sans']" viewBox="0 0 88 90">
        <circle cx="44" cy="44" r="33.500" fill="none" stroke="#333" stroke-width="7"/>
        <path d="M28 29h32v31H28z" fill="#b4b4b4"/><path d="M34 34h20v20H34z" fill="#a8a8ae"/>
        <g fill="#b8b8b8" font-size="14" text-anchor="middle" class="font-bold">
          <text x="44" y="15">N</text><text x="44" y="84">S</text><text x="9" y="49">W</text><text x="79" y="49">E</text>
        </g>
        <text x="44" y="48" text-anchor="middle" font-size="8" class="font-bold" fill="#444">TOP</text>
      </svg>
      <button class="absolute right-[30px] top-[127px] w-[45px] h-4 rounded-[4px] border border-[#b4b4c0] bg-[#9494a4] text-[#54545f] font-['Liberation_Sans'] text-[11px] text-left leading-[14px] pl-[3px]">WCS</button>

      <!-- navigation bar -->
      <svg class="absolute right-[3px] top-[167px] w-[30px] h-[200px]" viewBox="0 0 30 200" fill="none" stroke="#262626">
        <rect x=".5" y=".5" width="29" height="198" rx="3" fill="#404040" stroke="#4c4c4c"/>
        <circle cx="24" cy="5" r="2.500"/><path d="M15 19h9v10a10 10 0 1 1-9-10z"/><circle cx="15" cy="28" r="5.500"/>
        <path d="M13 46h4l-2 2.500zM13 112h4l-2 2.500zM13 147h4l-2 2.500z" fill="#262626"/>
        <path d="M1 53h28M1 153h28" stroke="#505050"/>
        <path d="M11 77 4 69c1-2 3-1 5 2L8 60c1-2 3-1 3 1l2 6V59c1-2 3-2 3 0v8l3-7c1-1 3 0 2 2l-1 7 3-4c1-1 3 0 2 2l-5 10z"/>
        <path d="m4 86 13 13M18 86 5 98M3 84l3 3M19 84l-3 3M3 99l3-3"/><circle cx="19" cy="98" r="4"/><path d="m22 101 4 4" stroke-width="2"/>
        <path d="M12 123h5v16h-5zM14.500 119v4M6 134c-6-6 18-8 19-3 0 3-8 5-13 4M10 132l-3 3 4 2"/>
        <path d="M4.500 158.500h5v6h-5zM12.500 158.500h5v6h-5zM20.500 158.500h5v6h-5zM4.500 167.500h15v13h-15z"/><path d="m9 170 6 4-6 4z" fill="#262626"/>
        <circle cx="24" cy="193" r="3"/><path d="m22 192 2 2 2-2"/>
      </svg>
    </main>

    <!-- command line -->
    <footer class="h-9 shrink-0 flex border-t-[3px] border-[#666] overflow-hidden">
      <div class="w-[21px] flex flex-col items-center gap-[5px] pt-1 bg-gradient-to-b from-[#8a8a8a] to-[#444]">
        <svg class="w-4 h-[6px]" viewBox="0 0 16 6"><path d="M0 .5h16M0 2.500h16M0 4.500h16" stroke="#ccc" stroke-dasharray="1 1"/></svg>
        <button aria-label="Close command line"><svg class="w-[9px] h-[9px]" viewBox="0 0 9 9"><path d="m1 1 7 7M8 1 1 8" stroke="#fff" stroke-width="2"/></svg></button>
      </div>
      <div class="flex-1 flex flex-col">
        <p class="h-[27px] bg-[#c8c8c8] border-b border-[#777] pl-[3px] pt-[10px] font-['DejaVu_Sans_Mono',monospace] text-[11px] leading-[14px] text-[#111]">** STRETCH **</p>
        <div class="flex-1 bg-white border-b border-[#777] flex items-end gap-1 pl-[200px]">
          <i class="w-[66px] h-[2px] bg-[#ccc]"></i><i class="w-[26px] h-[2px] bg-[#ccc]"></i><i class="w-[26px] h-[2px] bg-[#ccc]"></i><i class="w-[26px] h-[2px] bg-[#ccc]"></i>
        </div>
      </div>
    </footer>
  </div>

  <!-- channel badge -->
  <svg class="absolute right-[6px] top-[558px] w-[156px] h-[156px] font-['Lato']" viewBox="0 0 156 156">
    <defs><path id="ring" d="M15 101A67 67 0 1 1 141 101"/></defs>
    <circle cx="78" cy="78" r="77" fill="#2f2d2e"/>
    <circle cx="78" cy="78" r="64" fill="#fff"/>
    <path d="M24 102a59 59 0 1 1 108 0" fill="none" stroke="#f8dc14" stroke-width="7"/>
    <text font-size="11" class="font-bold" fill="#f4f4f4"><textPath href="#ring" startOffset="50%" text-anchor="middle">CAPACITAÇÃO EM CÁLCULOS ESTRUTURAIS</textPath></text>
    <circle cx="8" cy="91" r="1.700" fill="none" stroke="#fff"/><circle cx="148" cy="91" r="1.700" fill="none" stroke="#fff"/><circle cx="78" cy="150" r="2" fill="#fff"/>
    <!-- crane -->
    <g fill="#6c6c6c">
      <path d="m92 31 5-4 5 4v8H92z"/>
      <path d="M94 38h8v64h-8z"/>
      <path d="M101 71h7l3-4h5v-3h6v4h6v18l-3 5h-14v7h-10z"/>
      <path d="M91 97h22v6H91zM84 103h28v4H84z"/>
      <path d="m33 49 72 22-3 8-70-22z"/>
    </g>
    <path d="m34 56 5-6 4 8 5-6 4 9 5-6 4 9 5-6 4 8 5-5 4 8 5-6 4 8 5-6 4 7" fill="none" stroke="#fff" stroke-width=".9"/>
    <path d="m95 42 5 7-5 7 5 7-5 7 5 8-5 7 5 7" fill="none" stroke="#eee"/>
    <path d="m95 32-57 10M95 38 76 54M101 34l17 32M99 34l11 34" fill="none" stroke="#666" stroke-dasharray="3 1"/>
    <!-- lower banner -->
    <path d="M17 102h122c-9 28-31 45-61 45S26 130 17 102z" fill="#fff"/>
    <path d="M22 106h112c-9 23-29 37-56 37S31 129 22 106z" fill="#2f2d2e"/>
    <path d="M32 108c-3-26 12-36 22-37l1-2c4-2 8-2 11 0l1 2c12 3 18 15 16 32l2 6c-5 8-47 12-53-1z" fill="#f8dc14" stroke="#fff" stroke-width="2"/>
    <path d="M56 71v14M65 71v14M34 106c10-6 40-6 49-1" fill="none" stroke="#fff6a8" stroke-width="1.500"/>
    <text x="111" y="121" text-anchor="end" font-size="8" class="font-bold" fill="#fff">CANAL DA</text>
    <text x="111" y="132" text-anchor="end" font-size="11" class="font-bold" fill="#f8ec14">ENGENHARIA</text>
  </svg>

  <!-- static along the recording edge -->
  <svg class="w-[6px] shrink-0 self-stretch">
    <filter id="static" x="0" y="0" width="100%" height="100%"><feTurbulence type="turbulence" baseFrequency=".9" numOctaves="2"/><feColorMatrix values="3 0 0 0 -.2  0 3 0 0 -.2  0 0 3 0 -.2  0 0 0 0 1"/></filter>
    <rect width="100%" height="100%" filter="url(#static)"/>
  </svg>
</body>
</html>
